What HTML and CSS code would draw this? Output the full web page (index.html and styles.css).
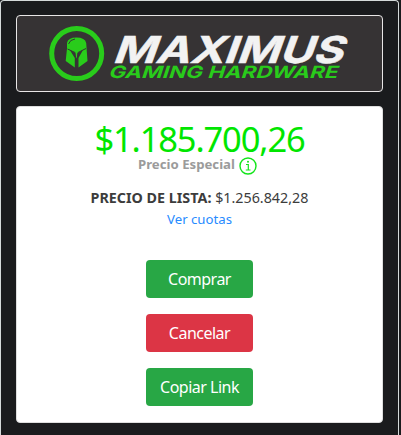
FILE: index.html
```html
<!DOCTYPE html>
<html lang="es">
<head>
<meta charset="utf-8">
<title>Maximus Gaming Hardware</title>
<link rel="stylesheet" href="styles.css">
</head>
<body>
<main class="window">
  <header class="brand">
    <svg class="logo" width="365" height="75" viewBox="17 16 365 75" role="img" aria-label="Maximus Gaming Hardware">
      <circle cx="76.7" cy="53.5" r="25" fill="none" stroke="#29cc1b" stroke-width="5"/>
      <path fill="#29cc1b" d="M67 48.500V43Q68 37.500 76.500 37.500Q85 37.500 86.200 43L87.500 61L78.500 67.500V58L83 50L77.500 53.200L76.500 59L75.200 53.200L69.500 49.500L74.800 58V67.500L65.700 61Z"/>
      <path fill="none" stroke="#363334" stroke-width="1" d="M67.500 49L75 52.500V57Q76.600 60 78 57V52.500L86 48.500M68.500 44Q70 39.500 75 39"/>
      <g transform="translate(114 63) skewX(-20)">
        <text class="name" x="-2" y="0" textLength="230" lengthAdjust="spacingAndGlyphs">MAXIMUS</text>
      </g>
      <g transform="translate(109 77.700) skewX(-18)">
        <text class="tagline" x="-1" y="0" textLength="229" lengthAdjust="spacingAndGlyphs">GAMING HARDWARE</text>
      </g>
    </svg>
  </header>
  <section class="panel">
    <div class="price">$1.185.700,26</div>
    <div class="special">
      <span>Precio Especial</span>
      <svg width="18" height="18" viewBox="0 0 18 18" fill="none" stroke="#12e51a">
        <circle cx="9" cy="9" r="8" stroke-width="1.400"/>
        <path d="M7 7.500H9.300V13M6.800 13H11.500" stroke-width="1.200"/>
        <circle cx="9" cy="4.800" r="1" fill="#12e51a" stroke="none"/>
      </svg>
    </div>
    <div class="list"><b>PRECIO DE LISTA:</b> <span>$1.256.842,28</span></div>
    <a class="link">Ver cuotas</a>
    <div class="actions">
      <button class="btn">Comprar</button>
      <button class="btn danger">Cancelar</button>
      <button class="btn">Copiar Link</button>
    </div>
  </section>
</main>
</body>
</html>
```
FILE: styles.css
```css
* { box-sizing: border-box; }
body {
  margin: 0;
  height: 435px;
  overflow: hidden;
  background: #1a1b1d;
  font-family: "Noto Sans", "Open Sans", sans-serif;
}
.window {
  width: 399px;
  height: 435px;
  padding: 14px 15px 0;
  border: 1px solid #d5dada;
  border-bottom: 0;
  border-radius: 4px 4px 0 0;
}
.brand {
  width: 367px;
  height: 77px;
  border: 1px solid #e8e6e6;
  border-radius: 4px;
  background: #363334;
}
.logo { display: block; }
.name {
  font: 700 37px Inter, sans-serif;
  fill: #f2f2f2;
  stroke: #f2f2f2;
  stroke-width: .500px;
}
.tagline {
  font: 700 17px Inter, sans-serif;
  fill: #29cc1b;
}
.panel {
  display: flex;
  flex-direction: column;
  align-items: center;
  width: 367px;
  height: 317px;
  margin-top: 14px;
  padding-top: 15px;
  border: 1px solid #dedede;
  border-radius: 4px;
  background: #fff;
  white-space: nowrap;
}
.price {
  height: 35px;
  color: #00e600;
  font-size: 34.500px;
  line-height: 34px;
  letter-spacing: -1.150px;
}
.special {
  display: flex;
  gap: 4px;
  height: 18px;
  margin-right: 4px;
  color: #9b9b9b;
  font-size: 13.200px;
  font-weight: 700;
  line-height: 15px;
}
.list {
  height: 22px;
  margin-top: 12px;
  color: #3c3c3c;
  font-size: 14.300px;
  line-height: 22px;
}
.link {
  height: 20px;
  color: #278bff;
  font-size: 13.200px;
  line-height: 20px;
}
.actions {
  display: flex;
  flex-direction: column;
  gap: 16px;
  margin-top: 31px;
}
.btn {
  width: 107px;
  height: 38px;
  padding: 0;
  border: 0;
  border-radius: 4px;
  background: #28a745;
  color: #fff;
  font: 16px/38px "Noto Sans", "Open Sans", sans-serif;
  letter-spacing: -.500px;
}
.danger { background: #dc3545; }
```
